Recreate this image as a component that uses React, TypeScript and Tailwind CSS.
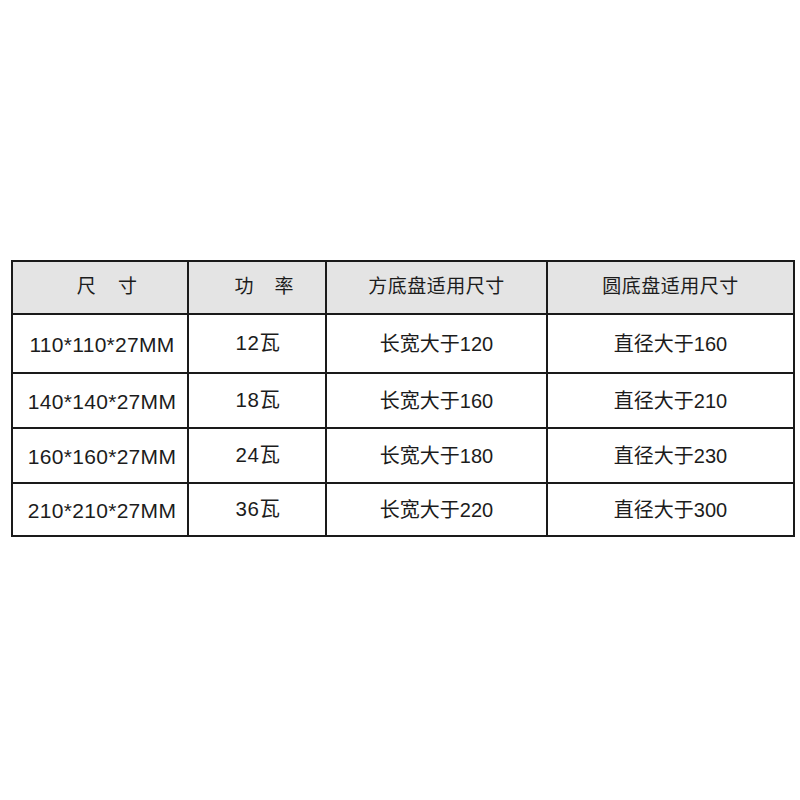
const rows = [
  { size: "110*110*27MM", power: "12瓦", square: "长宽大于120", round: "直径大于160", h: "h-[59px]" },
  { size: "140*140*27MM", power: "18瓦", square: "长宽大于160", round: "直径大于210", h: "h-[55px]" },
  { size: "160*160*27MM", power: "24瓦", square: "长宽大于180", round: "直径大于230", h: "h-[55px]" },
  { size: "210*210*27MM", power: "36瓦", square: "长宽大于220", round: "直径大于300", h: "h-[53px]" },
];

const cell = "border-2 border-[#1a1a1a] text-center align-middle p-0";

export default function App() {
  return (
    <div className="h-[800px] w-[800px] bg-white pt-[260px] pl-[11px] font-['Liberation_Sans','Noto_Sans_CJK_SC',sans-serif] text-[#1c1c1c]">
      <table className="w-[782px] table-fixed border-collapse text-[20px]">
        <colgroup>
          <col className="w-[176px]" />
          <col className="w-[138px]" />
          <col className="w-[221px]" />
          <col className="w-[247px]" />
        </colgroup>
        <thead>
          <tr className="h-[53px] bg-[#e4e4e4]">
            <th className={`${cell} pl-[14px] font-normal text-[19px] tracking-[0.2px]`}>尺&nbsp;&nbsp;&nbsp;&nbsp;寸</th>
            <th className={`${cell} pl-[14px] font-normal text-[19px]`}>功&nbsp;&nbsp;&nbsp;&nbsp;率</th>
            <th className={`${cell} font-normal text-[19px] tracking-[0.5px]`}>方底盘适用尺寸</th>
            <th className={`${cell} font-normal text-[19px] tracking-[0.5px]`}>圆底盘适用尺寸</th>
          </tr>
        </thead>
        <tbody>
          {rows.map((r) => (
            <tr key={r.size} className={r.h}>
              <td className={`${cell} pl-[4px] pt-[2px] text-[21px] tracking-[0.3px]`}>{r.size}</td>
              <td className={`${cell} pl-[2px] text-[20.5px] tracking-[0.5px]`}>{r.power}</td>
              <td className={cell}>{r.square}</td>
              <td className={cell}>{r.round}</td>
            </tr>
          ))}
        </tbody>
      </table>
    </div>
  );
}
